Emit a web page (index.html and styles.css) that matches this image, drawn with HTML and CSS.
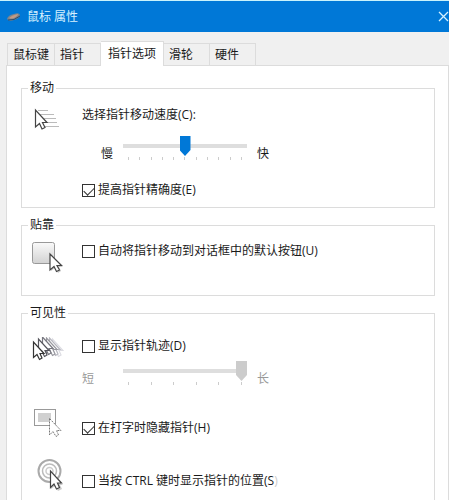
FILE: index.html
```html
<!DOCTYPE html>
<html lang="zh-CN">
<head>
  <meta charset="UTF-8">
  <meta name="viewport" content="width=device-width, initial-scale=1.0">
  <title>鼠标 属性</title>
  <link rel="stylesheet" href="styles.css">
</head>
<body>
  <div class="window">
    <header class="titlebar">
      <svg class="mouse-icon" width="16" height="12" viewBox="0 0 16 12">
        <path d="M1 8 Q2 4 8 3 Q13 1 14 4 Q14 7 8 9 Q3 11 1 8Z" fill="#7b858e"/>
        <path d="M3 7 Q6 4 12 3 Q12 5 8 7 Q5 8 3 7Z" fill="#c39a83"/>
        <path d="M2 9 Q8 10 14 5" fill="none" stroke="#344b66"/>
      </svg>
      <h1>鼠标 属性</h1>
      <button type="button" class="close" aria-label="关闭">
        <svg width="11" height="11" viewBox="0 0 11 11">
          <path d="M1 1 L10 10 M10 1 L1 10" stroke="#d5f1ff" stroke-width="1.3"/>
        </svg>
      </button>
    </header>

    <nav class="tabs">
      <button type="button" class="tab">鼠标键</button>
      <button type="button" class="tab">指针</button>
      <button type="button" class="tab active">指针选项</button>
      <button type="button" class="tab">滑轮</button>
      <button type="button" class="tab">硬件</button>
    </nav>

    <main class="panel">
      <fieldset class="group">
        <legend>移动</legend>
        <div class="row">
          <svg class="icon" width="32" height="32" viewBox="0 0 32 32">
            <path d="M6 4.500H16M8 8.500H22M11 12.500H24M13 16.500H25M12 20.500H27" stroke="#bbb"/>
            <path d="M3.500 4V21L7.500 17.500L10 23L13 21.500L10.500 16.500H15Z" fill="#fff" stroke="#444" stroke-width="1.2"/>
          </svg>
          <div class="options">
            <label for="speed">选择指针移动速度(C):</label>
            <div class="slider-row indent">
              <span class="low">慢</span>
              <div class="slider">
                <input type="range" id="speed" min="0" max="10" value="5">
                <div class="ticks"><i></i><i></i><i></i><i></i><i></i><i></i><i></i><i></i><i></i><i></i><i></i></div>
              </div>
              <span>快</span>
            </div>
            <label class="check precision"><input type="checkbox" checked>提高指针精确度(E)</label>
          </div>
        </div>
      </fieldset>

      <fieldset class="group snap">
        <legend>贴靠</legend>
        <div class="row">
          <svg class="icon" width="32" height="32" viewBox="0 0 32 32">
            <defs>
              <linearGradient id="face" x1="0" y1="0" x2="0" y2="1">
                <stop offset="0" stop-color="#fafafa"/>
                <stop offset="1" stop-color="#d2d2d2"/>
              </linearGradient>
            </defs>
            <rect x="0.500" y="0.500" width="22" height="21" rx="2" fill="url(#face)" stroke="#999"/>
            <path d="M19 14V29L23 26L26 31L29 29L27 25H31Z" fill="#ccc"/>
            <path d="M18 12V28L22 24.500L24.500 29.500L27.500 28L25 23.500H29.500Z" fill="#fff" stroke="#444" stroke-width="1.2"/>
          </svg>
          <div class="options">
            <label class="check"><input type="checkbox">自动将指针移动到对话框中的默认按钮(U)</label>
          </div>
        </div>
      </fieldset>

      <fieldset class="group visibility">
        <legend>可见性</legend>
        <div class="row">
          <svg class="icon" width="32" height="32" viewBox="0 0 32 32">
            <defs>
              <path id="trail" d="M1.500 5V20.500L5 17.500L7.500 22.500L10 21L8 16.500H12Z"/>
            </defs>
            <g fill="#fff" stroke-width="1.2">
              <use href="#trail" x="19" y="-3" stroke="#dcdce2"/>
              <use href="#trail" x="16" y="-4" stroke="#b8b8c0"/>
              <use href="#trail" x="13" y="-4" stroke="#98989f"/>
              <use href="#trail" x="9" y="-5" stroke="#77777f"/>
              <use href="#trail" x="5" y="-3" stroke="#55555c"/>
              <use href="#trail" stroke="#333"/>
            </g>
          </svg>
          <div class="options">
            <label class="check"><input type="checkbox">显示指针轨迹(D)</label>
            <div class="slider-row disabled">
              <span class="low">短</span>
              <div class="slider">
                <input type="range" aria-label="指针轨迹长度" min="0" max="5" value="5" disabled>
                <div class="ticks"><i></i><i></i><i></i><i></i><i></i><i></i></div>
              </div>
              <span>长</span>
            </div>
          </div>
        </div>
        <div class="row typing">
          <svg class="icon" width="32" height="32" viewBox="0 0 32 32">
            <rect x="2.500" y="1.500" width="21" height="16" fill="#fff" stroke="#999"/>
            <rect x="6" y="5" width="13" height="9" fill="#d0d0d0"/>
            <path d="M17.500 10.500V27L21 23.500L24 28.500L26.500 27L24.500 22.500H29Z" fill="#fff" stroke="#777" stroke-dasharray="2 1"/>
          </svg>
          <div class="options">
            <label class="check"><input type="checkbox" checked>在打字时隐藏指针(H)</label>
          </div>
        </div>
        <div class="row locate">
          <svg class="icon" width="32" height="32" viewBox="0 0 32 32">
            <g fill="none">
              <circle cx="17.500" cy="12" r="11" stroke="#aaa" stroke-width="2"/>
              <circle cx="17.500" cy="12" r="7" stroke="#bbb" stroke-width="1.500"/>
              <circle cx="17.500" cy="12" r="3.500" stroke="#ccc" stroke-width="1.500"/>
            </g>
            <path d="M19 15V30L23 27L26 32L30 30L28 26H31Z" fill="#ccc"/>
            <path d="M18.500 12V28.500L22 25L24.500 30L27.500 28.500L25.500 24H29.500Z" fill="#fff" stroke="#444" stroke-width="1.2"/>
          </svg>
          <div class="options">
            <label class="check"><input type="checkbox"><span>当按 CTRL 键时显示指针的位置(S<span class="faint">)</span></span></label>
          </div>
        </div>
      </fieldset>
    </main>
  </div>
</body>
</html>
```
FILE: styles.css
```css
* {
  box-sizing: border-box;
}
body {
  margin: 0;
  background: #fff;
  color: #1a1a1a;
  font-family: "Open Sans", "Noto Sans CJK SC", sans-serif;
  font-size: 12px;
  line-height: 18px;
}
button {
  font: inherit;
  color: inherit;
}
.window {
  display: flex;
  flex-direction: column;
  height: 100vh;
  margin-right: 1px;
  overflow: hidden;
  background: #f0f0f0;
}

/* title bar */
.titlebar {
  display: flex;
  flex: none;
  align-items: center;
  height: 32px;
  padding-left: 6px;
  background: #0078d7;
  border-top: 1px solid #c9f3fc;
  color: #d5f1ff;
}
.titlebar h1 {
  flex: 1;
  margin: 0 0 0 5px;
  font-size: 12px;
  font-weight: normal;
}
.close {
  display: flex;
  padding: 0;
  background: none;
  border: none;
}

/* tabs */
.tabs {
  display: flex;
  flex: none;
  align-items: flex-end;
  height: 33px;
  padding-left: 7px;
}
.tab {
  height: 22px;
  padding: 0 16px 0 5px;
  background: #f0f0f0;
  border: 1px solid #dcdcdc;
  border-left: none;
  border-bottom: none;
  white-space: nowrap;
}
.tab:first-child {
  padding: 0 5px;
  border-left: 1px solid #dcdcdc;
}
.tab.active {
  z-index: 1;
  height: 25px;
  margin-bottom: -1px;
  padding: 0 7px 1px;
  background: #fff;
}

/* page */
.panel {
  flex: 1;
  min-height: 0;
  margin-left: 6px;
  padding: 13px 13px 0 14px;
  background: #fff;
  border: 1px solid #dcdcdc;
  border-bottom: none;
}
.group {
  min-width: 0;
  margin: 0 0 8px;
  padding: 9px 10px 8px;
  border: 1px solid #dcdcdc;
}
.group legend {
  margin-left: -4px;
  padding: 0 2px;
}
.group.snap {
  padding-top: 8px;
  padding-bottom: 21px;
}
.group.visibility {
  padding-top: 15px;
  padding-bottom: 24px;
}
.row {
  display: grid;
  grid-template-columns: 50px 1fr;
  align-items: start;
}
.options {
  display: flex;
  flex-direction: column;
  align-items: flex-start;
}
.check {
  display: flex;
  align-items: center;
  gap: 3px;
}
.check input {
  appearance: none;
  width: 13px;
  height: 13px;
  margin: 0;
  background: #fff;
  border: 1px solid #333;
}
.check input:checked::before {
  content: "";
  display: block;
  width: 9px;
  height: 5px;
  margin: 2px 0 0 1px;
  border: solid #333;
  border-width: 0 0 1px 1px;
  transform: rotate(-45deg);
}
.precision {
  margin-top: 18px;
}
.typing {
  margin-top: 20px;
}
.typing .check {
  margin-top: 11px;
}
.locate {
  margin-top: 19px;
}
.locate .check {
  margin-top: 13px;
}
.faint {
  color: #ccc;
}

/* sliders */
.slider-row {
  display: grid;
  grid-template-columns: 31px 124px auto;
  column-gap: 10px;
  align-items: end;
  margin-top: 12px;
}
.slider-row.disabled {
  margin-top: 6px;
  color: #999;
}
.indent .low {
  text-align: right;
}
.slider input {
  appearance: none;
  display: block;
  width: 100%;
  height: 20px;
  margin: 0;
  background: linear-gradient(#dedede, #dedede) center / 100% 4px no-repeat;
}
.slider input::-webkit-slider-thumb {
  appearance: none;
  width: 11px;
  height: 20px;
  background: #0078d7;
  clip-path: polygon(0 0, 100% 0, 100% 70%, 50% 100%, 0 70%);
}
.slider input:disabled::-webkit-slider-thumb {
  background: #ccc;
}
.ticks {
  display: flex;
  justify-content: space-between;
  padding: 1px 5px 3px;
}
.ticks i {
  width: 1px;
  height: 3px;
  background: #ccc;
}
```
